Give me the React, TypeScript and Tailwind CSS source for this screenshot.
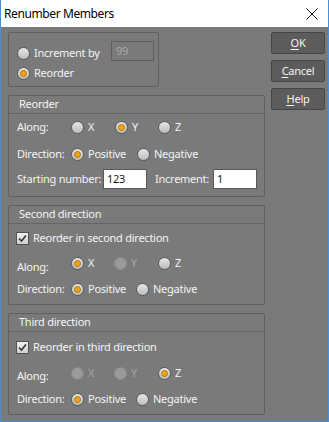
import React from "react";

const font = { fontFamily: '"Noto Sans", "Open Sans", sans-serif', letterSpacing: "-0.25px" };

function Radio({ checked = false, disabled = false }: { checked?: boolean; disabled?: boolean }) {
  return (
    <span
      className={
        "relative inline-flex items-center justify-center w-[13px] h-[13px] rounded-full border shrink-0 " +
        (disabled
          ? "border-[#8a8a8a] bg-[#9a9a9a]"
          : "border-[#5a5a5a] bg-gradient-to-b from-[#e6e6e6] to-[#bdbdbd]")
      }
    >
      {checked && (
        <span className="w-[7px] h-[7px] rounded-full bg-[#f0a418] border border-[#b87408]" />
      )}
    </span>
  );
}

function RadioOpt({
  label,
  checked,
  disabled,
  w,
}: {
  label: string;
  checked?: boolean;
  disabled?: boolean;
  w: string;
}) {
  return (
    <div className={"flex items-center gap-[4px] whitespace-nowrap " + w}>
      <Radio checked={checked} disabled={disabled} />
      <span className={disabled ? "text-[#a4a4a4]" : "text-[#f4f4f4]"}>{label}</span>
    </div>
  );
}

function Checkbox() {
  return (
    <span className="inline-flex items-center justify-center w-[13px] h-[13px] border border-[#505050] bg-gradient-to-b from-[#f0f0f0] to-[#cfcfcf] shrink-0">
      <svg width="9" height="9" viewBox="0 0 9 9">
        <path d="M1 4.5 L3.5 7 L8 1.5" fill="none" stroke="#333" strokeWidth="1.6" />
      </svg>
    </span>
  );
}

function Header({ title }: { title: string }) {
  return (
    <div className="h-[18px] flex items-center pl-[10px] border-b border-[#656565] text-[#f4f4f4] whitespace-nowrap">
      {title}
    </div>
  );
}

function Btn({ first, rest }: { first: string; rest: string }) {
  return (
    <div className="w-[54px] h-[22px] flex items-center justify-center rounded-[2px] border border-[#454545] bg-[#5c5c5c] text-[#f4f4f4]">
      <span>
        <span className="underline underline-offset-2">{first}</span>
        {rest}
      </span>
    </div>
  );
}

export default function App() {
  return (
    <div
      className="w-[329px] h-[422px] flex flex-col border-l border-r border-b border-[#4a8fd6] text-[11px]"
      style={font}
    >
      <div className="h-[27px] bg-white flex items-center justify-between pl-[3px] pr-[10px] shrink-0">
        <span className="text-[12px] text-black tracking-[-0.4px]">Renumber Members</span>
        <svg width="12" height="12" viewBox="0 0 12 12">
          <path d="M0.5 0.5 L11.5 11.5 M11.5 0.5 L0.5 11.5" stroke="#111" strokeWidth="1" />
        </svg>
      </div>
      <div className="flex-1 bg-[#7a7a7a] flex pl-[7px] pr-[3px] pt-[5px]">
        <div className="w-[257px] flex flex-col gap-[8px]">
          {/* top box */}
          <div className="w-[151px] h-[55px] rounded-[2px] border border-[#606060] relative shrink-0">
            <div className="absolute left-[8px] top-[12px] flex items-center gap-[4px] whitespace-nowrap">
              <Radio />
              <span className="text-[#f4f4f4]">Increment by</span>
            </div>
            <div className="absolute left-[8px] top-[32px] flex items-center gap-[4px]">
              <Radio checked />
              <span className="text-[#f4f4f4]">Reorder</span>
            </div>
            <div className="absolute left-[102px] top-[8px] w-[43px] h-[20px] border border-[#5e5e5e] flex items-center pl-[4px] text-[#a8a8a8]">
              99
            </div>
          </div>

          {/* Reorder */}
          <div className="h-[102px] rounded-[2px] border border-[#606060] flex flex-col shrink-0">
            <Header title="Reorder" />
            <div className="h-[26px] flex items-center pl-[8px]">
              <span className="w-[54px] text-[#f4f4f4]">Along:</span>
              <RadioOpt label="X" w="w-[44px]" />
              <RadioOpt label="Y" checked w="w-[43px]" />
              <RadioOpt label="Z" w="w-[40px]" />
            </div>
            <div className="h-[28px] flex items-center pl-[8px]">
              <span className="w-[54px] text-[#f4f4f4]">Direction:</span>
              <RadioOpt label="Positive" checked w="w-[66px]" />
              <RadioOpt label="Negative" w="w-[80px]" />
            </div>
            <div className="mt-[1px] h-[20px] flex items-center pl-[8px] whitespace-nowrap">
              <span className="w-[86px] text-[#f4f4f4]">Starting number:</span>
              <div className="w-[44px] h-[20px] bg-white border border-[#5a5a5a] flex items-center pl-[3px] text-[#1a1a1a]">
                123
              </div>
              <span className="w-[66px] pl-[8px] text-[#f4f4f4]">Increment:</span>
              <div className="w-[44px] h-[20px] bg-white border border-[#5a5a5a] flex items-center pl-[3px] text-[#1a1a1a]">
                1
              </div>
            </div>
          </div>

          {/* Second direction */}
          <div className="h-[100px] rounded-[2px] border border-[#606060] flex flex-col shrink-0">
            <Header title="Second direction" />
            <div className="h-[28px] flex items-center pl-[7px] gap-[4px] text-[#f4f4f4] whitespace-nowrap">
              <Checkbox />
              <span>Reorder in second direction</span>
            </div>
            <div className="h-[22px] flex items-center pl-[8px]">
              <span className="w-[54px] text-[#f4f4f4] translate-y-[4px]">Along:</span>
              <RadioOpt label="X" checked w="w-[43px]" />
              <RadioOpt label="Y" disabled w="w-[44px]" />
              <RadioOpt label="Z" w="w-[40px]" />
            </div>
            <div className="h-[30px] flex items-center pl-[8px]">
              <span className="w-[54px] text-[#f4f4f4]">Direction:</span>
              <RadioOpt label="Positive" checked w="w-[65px]" />
              <RadioOpt label="Negative" w="w-[80px]" />
            </div>
          </div>

          {/* Third direction */}
          <div className="h-[102px] rounded-[2px] border border-[#606060] flex flex-col shrink-0">
            <Header title="Third direction" />
            <div className="h-[30px] flex items-center pl-[7px] gap-[4px] text-[#f4f4f4] whitespace-nowrap">
              <Checkbox />
              <span>Reorder in third direction</span>
            </div>
            <div className="h-[22px] flex items-center pl-[8px]">
              <span className="w-[54px] text-[#f4f4f4] translate-y-[3px]">Along:</span>
              <RadioOpt label="X" disabled w="w-[43px]" />
              <RadioOpt label="Y" disabled w="w-[44px]" />
              <RadioOpt label="Z" checked w="w-[40px]" />
            </div>
            <div className="h-[30px] flex items-center pl-[8px]">
              <span className="w-[54px] text-[#f4f4f4]">Direction:</span>
              <RadioOpt label="Positive" checked w="w-[65px]" />
              <RadioOpt label="Negative" w="w-[80px]" />
            </div>
          </div>
        </div>
        <div className="ml-[6px] flex flex-col gap-[6px]">
          <Btn first="O" rest="K" />
          <Btn first="C" rest="ancel" />
          <Btn first="H" rest="elp" />
        </div>
      </div>
    </div>
  );
}
